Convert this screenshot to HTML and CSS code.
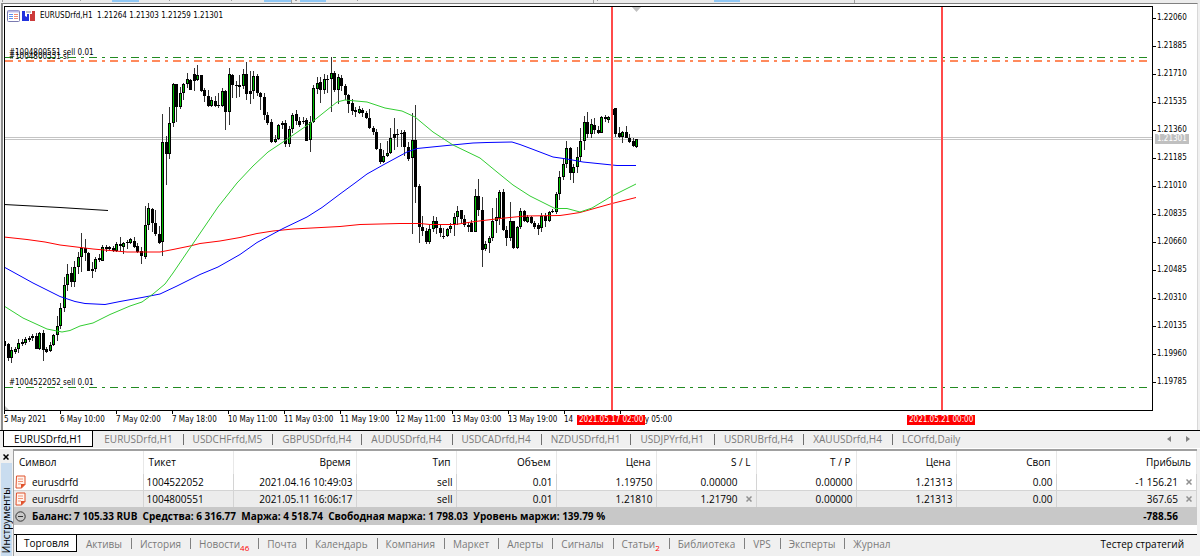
FILE: index.html
```html
<!DOCTYPE html>
<html lang="ru">
<head>
<meta charset="utf-8">
<title>EURUSDrfd,H1</title>
<link rel="stylesheet" href="styles.css">
</head>
<body>
<div class="toolbar-edge" aria-hidden="true">
  <svg class="toolbar-marks">
    <g fill="#90c8f6"><rect x="112" width="27" height="2"/><rect x="264" width="27" height="2"/><rect x="300" width="26" height="2"/><rect x="714" width="26" height="2"/></g>
    <g fill="#a0a0a0"><rect x="2" width="1" height="2"/><rect x="80" width="1" height="1"/><rect x="169" width="1" height="1"/><rect x="231" width="1" height="1"/><rect x="291" width="1" height="3"/><rect x="295" width="2" height="1"/><rect x="357" width="1" height="1"/><rect x="593" width="1" height="3"/><rect x="597" width="1" height="1"/><rect x="854" width="1" height="3"/></g>
  </svg>
</div>

<main class="chart-window">
  <div class="plot">
    <svg class="plot-svg" role="img" aria-label="EURUSDrfd H1">
      <g transform="translate(-5 -7)">
        <g class="price-line"><line x1="5" x2="110%" y1="137.5" y2="137.5"/><line x1="5" x2="110%" y1="139.5" y2="139.5"/></g>
        <line class="level order" x1="5" x2="1150" y1="57.5" y2="57.5"/>
        <line class="level stop" x1="5" x2="1150" y1="61" y2="61"/>
        <line class="level order" x1="5" x2="1150" y1="387.5" y2="387.5"/>
        <g id="candles" shape-rendering="crispEdges"></g>
        <g class="averages">
          <polyline stroke="#000" points="4,204.5 60,207.5 108,210.5"/>
          <polyline stroke="#f00" points="4,237 27,239.5 45,242 60,245 93,249 110,250.5 127,252 160,252 173,249.5 190,246 200,243.5 220,241 240,237.5 257,233.5 273,231 293,229 340,226.5 360,224.5 400,223.5 420,223.5 430,224.5 455,224.5 475,221.5 500,218.5 525,216 560,215.5 567,214.5 580,212.5 612,203.5 636,197.5"/>
          <polyline stroke="#00f" points="4,267 33,283 60,296.5 75,301.5 85,303.5 105,304.5 120,301.5 142,297.5 160,294 177,286 200,274.5 218,267 240,254.5 257,242.5 283,228.5 307,217 322,207.5 340,194 355,183 367,174 383,165 407,152 417,148.5 447,145.5 473,143 487,142.5 512,142 520,144.5 532,149 553,157 567,159 583,162 617,165.5 636,165.5"/>
          <polyline stroke="#32cd32" points="4,306 23,318 47,329 62,332 70,330.5 80,326 93,323 110,314.5 130,306 142,302 153,294 165,284 173,273 190,248 218,207 237,183 253,166 268,152 283,142 312,122 337,102 345,100 367,102 385,108 402,111 415,117 433,132 453,145 480,158 497,172 513,185 530,196 555,208.5 567,208.5 580,212 592,208 612,196 636,184"/>
        </g>
        <g class="day-line"><line x1="612" x2="612" y1="7" y2="410"/><line x1="942" x2="942" y1="7" y2="410"/></g>
        <path fill="#c0c0c0" d="M632 7h9l-4.500 5z"/>
        <path fill="#c0c0c0" d="M5 410v-4l4 4z"/>
      </g>
    </svg>
    <header class="plot-title">
      <svg class="title-icons" width="29" height="12">
        <rect x=".5" y=".5" width="12" height="11" rx="1" fill="#fff" stroke="#7a7ab0"/>
        <path d="M1 1.500h11" stroke="#b7b7e6" stroke-width="2"/>
        <path d="M2 4.500h4M2 6.500h4M2 8.500h4" stroke="#5b8ff0"/><path d="M7 4.500h4M7 6.500h4M7 8.500h4" stroke="#f08a74"/>
        <path d="M15 1h3v5l2 1v-3h2v7h-7z" fill="#2233dd"/><path d="M28 1h-3v3h-2v7h5z" fill="#cc3a3a"/><path d="M19 1h5v2h-5z" fill="#c4c4c4"/>
      </svg>
      <span>EURUSDrfd,H1&nbsp; 1.21264 1.21303 1.21259 1.21301</span>
    </header>
    <span class="order-label order-top">#1004800551 sell 0.01</span>
    <span class="order-label order-stop">#1004800551 sl</span>
    <span class="order-label order-low">#1004522052 sell 0.01</span>
  </div>
  <div class="price-axis">
    <span>1.22060</span><span>1.21885</span><span>1.21710</span><span>1.21535</span><span>1.21360</span><span>1.21185</span><span>1.21010</span><span>1.20835</span><span>1.20660</span><span>1.20485</span><span>1.20310</span><span>1.20135</span><span>1.19960</span><span>1.19785</span>
    <b class="price-tag">1.21301</b>
  </div>
  <div class="time-axis">
    <span>5 May 2021</span><span>6 May 10:00</span><span>7 May 02:00</span><span>7 May 18:00</span><span>10 May 11:00</span><span>11 May 03:00</span><span>11 May 19:00</span><span>12 May 11:00</span><span>13 May 03:00</span><span>13 May 19:00</span><span>14</span><span class="covered">y 05:00</span>
    <b class="time-tag tag-near">2021.05.17 02:00</b>
    <b class="time-tag tag-far">2021.05.21 00:00</b>
  </div>
</main>

<nav class="chart-tabs">
  <button class="chart-tab current">EURUSDrfd,H1</button><button class="chart-tab">EURUSDrfd,H1</button><button class="chart-tab">USDCHFrfd,M5</button><button class="chart-tab">GBPUSDrfd,H4</button><button class="chart-tab">AUDUSDrfd,H4</button><button class="chart-tab">USDCADrfd,H4</button><button class="chart-tab">NZDUSDrfd,H1</button><button class="chart-tab">USDJPYrfd,H1</button><button class="chart-tab">USDRUBrfd,H4</button><button class="chart-tab">XAUUSDrfd,H4</button><button class="chart-tab">LCOrfd,Daily</button>
  <span class="scrollers">
    <button class="icon-button" aria-label="Назад"><svg width="4" height="6"><path d="M4 0v6L0 3z" fill="#808080"/></svg></button>
    <button class="icon-button" aria-label="Вперёд"><svg width="4" height="6"><path d="M0 0v6l4-3z" fill="#808080"/></svg></button>
  </span>
</nav>

<section class="terminal">
  <aside class="side">
    <button class="icon-button side-close" aria-label="Закрыть"><svg width="6" height="6"><path d="M.5.5l5 5M5.500.5l-5 5" stroke="#000" stroke-width="1.500"/></svg></button>
    <div class="side-title"><span>Инструменты</span></div>
  </aside>
  <div class="panel">
    <table class="trades">
      <colgroup><col class="c-symbol"><col class="c-ticket"><col class="c-time"><col class="c-num"><col class="c-num"><col class="c-num"><col class="c-num"><col class="c-num"><col class="c-num"><col class="c-num"><col></colgroup>
      <thead><tr><th>Символ</th><th>Тикет</th><th>Время</th><th>Тип</th><th>Объем</th><th>Цена</th><th>S / L</th><th>T / P</th><th>Цена</th><th>Своп</th><th>Прибыль</th></tr></thead>
      <tbody>
        <tr><td><span class="symbol"><svg width="11" height="14"><path d="M1.500 1h8.500v8.500L6.500 13H1z" fill="#fff4ee" stroke="#e0522c"/><path d="M3 4h5M3 6.500h5M3 9h3" stroke="#ee9478"/><path d="M6 13.500V9h4.500z" fill="#e0522c"/></svg>eurusdrfd</span></td><td>1004522052</td><td>2021.04.16 10:49:03</td><td>sell</td><td>0.01</td><td>1.19750</td><td class="with-slot">0.00000</td><td>0.00000</td><td>1.21313</td><td>0.00</td><td><span class="closable">-1 156.21<button class="icon-button" aria-label="Закрыть позицию"><svg width="6" height="6"><path d="M.5.5l5 5M5.500.5l-5 5" stroke="#909090" stroke-width="1.500"/></svg></button></span></td></tr>
        <tr class="alt"><td><span class="symbol"><svg width="11" height="14"><path d="M1.500 1h8.500v8.500L6.500 13H1z" fill="#fff4ee" stroke="#e0522c"/><path d="M3 4h5M3 6.500h5M3 9h3" stroke="#ee9478"/><path d="M6 13.500V9h4.500z" fill="#e0522c"/></svg>eurusdrfd</span></td><td>1004800551</td><td>2021.05.11 16:06:17</td><td>sell</td><td>0.01</td><td>1.21810</td><td><span class="closable">1.21790<button class="icon-button" aria-label="Убрать S / L"><svg width="6" height="6"><path d="M.5.5l5 5M5.500.5l-5 5" stroke="#909090" stroke-width="1.500"/></svg></button></span></td><td>0.00000</td><td>1.21313</td><td>0.00</td><td><span class="closable">367.65<button class="icon-button" aria-label="Закрыть позицию"><svg width="6" height="6"><path d="M.5.5l5 5M5.500.5l-5 5" stroke="#909090" stroke-width="1.500"/></svg></button></span></td></tr>
      </tbody>
    </table>
    <div class="balance">
      <svg width="11" height="11"><circle cx="5.500" cy="5.500" r="4.700" fill="none" stroke="#333"/><path d="M3 5.500h5" stroke="#333"/></svg>
      <span class="balance-text">Баланс: 7 105.33 RUB&nbsp; Средства: 6 316.77&nbsp; Маржа: 4 518.74&nbsp; Свободная маржа: 1 798.03&nbsp; Уровень маржи: 139.79 %</span>
      <span class="balance-total">-788.56</span>
    </div>
    <nav class="tool-tabs">
      <button class="tool-tab current">Торговля</button><button class="tool-tab">Активы</button><button class="tool-tab">История</button><button class="tool-tab">Новости<sub>46</sub></button><button class="tool-tab">Почта</button><button class="tool-tab">Календарь</button><button class="tool-tab">Компания</button><button class="tool-tab">Маркет</button><button class="tool-tab">Алерты</button><button class="tool-tab">Сигналы</button><button class="tool-tab">Статьи<sub>2</sub></button><button class="tool-tab">Библиотека</button><button class="tool-tab">VPS</button><button class="tool-tab">Эксперты</button><button class="tool-tab">Журнал</button>
      <button class="tester">Тестер стратегий</button>
    </nav>
  </div>
</section>
<script src="chart.js"></script>
</body>
</html>
```
FILE: styles.css
```css
* { box-sizing: border-box; }
body {
  margin: 0;
  min-height: 100vh;
  display: flex;
  flex-direction: column;
  background: #f0f0f0;
  color: #000;
  font: 10px/16px "Open Sans", "Noto Sans", sans-serif;
}
button {
  margin: 0;
  padding: 0;
  border: 0;
  background: none;
  color: inherit;
  font: inherit;
}
svg { display: block; }

.toolbar-edge { height: 3px; background: #ececec; }
.toolbar-marks { width: 100%; height: 3px; }

/* chart */
.chart-window {
  display: grid;
  grid-template-columns: 1fr 44px;
  grid-template-rows: 405px 19px;
  padding: 2px 0 0 2px;
  border: 1px solid #808080;
  border-right-color: #d8d8d8;
  border-bottom: 0;
  border-left: 2px solid #8c8c8c;
  margin-left: 1px;
  margin-right: 2px;
  background: #fff;
  font: 8px/10px "DejaVu Sans Condensed", "DejaVu Sans", sans-serif;
}
.plot { position: relative; border: 1px solid #000; margin-left: -1px; }
.plot-svg { width: 100%; height: 100%; }
.price-line line { stroke: #c4c4c4; }
.level { stroke-dasharray: 8 5 3 5; }
.order { stroke: #228b22; }
.stop { stroke: #ff8a5c; stroke-width: 2; }
.averages polyline { fill: none; }
.day-line line { stroke: #ff4a4a; stroke-width: 2; }
.wick { fill: #333; }
.bear { fill: #000; }
.bull { fill: #00c000; }

.plot-title {
  position: absolute;
  top: 3px;
  left: 2px;
  display: flex;
  align-items: center;
  gap: 4px;
}
.order-label { position: absolute; left: 4px; }
.order-top { top: 41px; }
.order-stop { top: 45px; }
.order-low { top: 371px; }

.price-axis { position: relative; display: flex; flex-direction: column; margin-top: -2px; }
.price-axis span {
  display: flex;
  align-items: center;
  gap: 1px;
  height: 28px;
}
.price-axis span::before { content: ""; width: 3px; height: 1px; background: #000; }
.price-tag {
  position: absolute;
  top: 130px;
  left: 2px;
  padding: 0 2px;
  background: #c0c0c0;
  color: #fff;
  font-weight: normal;
}
.time-axis { position: relative; grid-column: 1 / -1; display: flex; margin-left: -1px; }
.time-axis span { flex: 0 0 56px; white-space: nowrap; }
.time-axis span::before { content: ""; display: block; width: 1px; height: 3px; margin-bottom: 1px; background: #000; }
.time-axis .covered { text-align: right; padding-right: 4px; }
.time-tag {
  position: absolute;
  top: 4px;
  padding: 0 2px;
  background: #f00;
  color: #fff;
  font-weight: normal;
}
.tag-near { left: 573px; }
.tag-far { left: 903px; }

/* chart tabs */
.chart-tabs {
  display: flex;
  align-items: flex-start;
  height: 19px;
  padding-left: 3px;
  border-top: 1px solid #000;
  border-bottom: 1px solid #fff;
  color: #7a7a7a;
}
.chart-tab { position: relative; height: 16px; padding: 0 10px; white-space: nowrap; }
.chart-tab.current { margin-right: 1px; }
.chart-tab:not(.current) + .chart-tab::before { content: ""; position: absolute; left: 0; top: 3px; width: 1px; height: 11px; background: #707070; }
.current { background: #fff; color: #000; border: solid #000; border-width: 0 1px 1px; }
.scrollers { display: flex; gap: 15px; margin-left: auto; padding: 5px 10px 0 0; }

/* terminal */
.terminal { flex: 1; display: flex; padding-right: 3px; }
.side { width: 13px; display: flex; flex-direction: column; }
.side-close { padding: 5px 0 3px 3px; }
.side-title { flex: 1; margin: 0 1px; padding-bottom: 3px; background: #c9dcef; display: flex; align-items: flex-end; justify-content: center; }
.side-title span { writing-mode: vertical-rl; transform: rotate(180deg); line-height: 11px; }
.panel { flex: 1; min-width: 0; background: #fff; border: 1px solid #a0a0a0; border-width: 2px 0 0 1px; display: flex; flex-direction: column; }

.trades { width: 100%; table-layout: fixed; border-collapse: collapse; }
.c-symbol { width: 129px; }
.c-ticket { width: 90px; }
.c-time { width: 123px; }
.c-num { width: 100px; }
.trades th, .trades td { padding: 0 3px; text-align: right; white-space: nowrap; border-right: 1px solid #d4d4d4; }
.trades th { height: 22px; padding: 0 5px; font-weight: normal; border-right-color: #e8e8e8; }
.trades td { height: 17px; border-top: 1px solid #d4d4d4; }
.trades tbody tr:first-child td { border-top-color: #fff; }
.trades th:nth-child(-n+2), .trades td:nth-child(-n+2) { text-align: left; }
.trades td:first-child { padding-left: 1px; }
.alt { background: #ececec; }
.symbol { display: flex; align-items: center; gap: 6px; }
.closable { display: flex; align-items: center; justify-content: flex-end; gap: 8px; padding-right: 1px; }
.trades .with-slot { padding-right: 18px; }

.balance { display: flex; align-items: center; gap: 6px; height: 18px; padding: 0 19px 0 1px; background: #c8c8c8; font-weight: bold; white-space: nowrap; }
.balance-total { margin-left: auto; }

.tool-tabs { flex: 1; display: flex; align-items: flex-start; margin-top: 9px; padding-left: 2px; border-top: 1px solid #000; background: #f0f0f0; color: #7a7a7a; }
.tool-tab { position: relative; height: 17px; padding: 0 9px; white-space: nowrap; }
.tool-tab.current { padding: 0 7px; }
.tool-tab:not(.current) + .tool-tab::before { content: ""; position: absolute; left: 0; top: 3px; width: 1px; height: 11px; background: #808080; }
.tool-tab sub { font-size: 8px; line-height: 8px; color: #f00; }
.tester { margin-left: auto; padding-right: 13px; color: #000; height: 17px; }
```
FILE: chart.js
```js
// Hourly candles: wick top, body top, body bottom, wick bottom, + rising / - falling.
const candles = `
341 341 346 346 -|343 344 358 361 -|347 350 358 363 +|347 349 352 354 +|339 343 349 353 +|339 342 344 346 -|337 339 343 345 +|336 338 340 342 -|334 336 338 341 +|333 336 349 349 -
332 333 349 350 +|330 333 350 361 -|347 349 352 353 -|342 345 351 352 +|334 335 345 346 +|316 326 335 341 +|303 308 326 329 +|277 285 308 312 +|264 274 285 291 +|267 273 282 287 -
261 267 282 287 +|252 257 267 274 +|233 248 257 272 +|239 248 253 261 -|252 253 271 271 -|262 269 271 278 -|257 259 269 272 +|254 258 260 262 -|245 247 261 261 +|245 247 249 252 -
246 247 249 250 -|246 248 251 252 -|242 244 251 252 +|237 244 246 251 -|242 243 247 254 +|240 242 243 249 -|238 239 243 244 +|237 241 247 248 -|243 246 252 253 -|247 251 256 264 -
206 225 257 259 +|203 208 225 230 +|208 209 223 232 -|210 223 234 236 -|226 234 243 244 -|114 142 242 256 +|136 142 154 185 -|107 123 154 159 +|83 84 123 127 +|84 84 107 122 -
87 93 107 109 +|83 84 93 100 +|73 79 84 88 +|79 80 90 90 -|68 74 81 91 -|65 75 80 81 +|75 75 91 92 -|88 90 96 102 -|90 96 106 107 -|97 100 106 107 +
96 101 106 107 -|93 105 106 108 -|88 91 106 107 +|90 91 112 130 -|68 74 112 125 +|74 75 85 98 -|81 85 86 98 -|75 85 87 97 -|69 74 86 89 +|62 74 94 100 -
71 91 94 104 -|71 76 91 99 +|74 76 93 96 -|92 93 97 110 -|93 97 115 120 -|112 115 123 125 -|119 122 142 143 -|135 139 142 143 +|124 125 139 140 +|121 123 125 129 -
120 123 144 147 -|126 129 144 147 +|113 115 129 133 +|110 114 121 125 -|117 121 125 127 -|117 121 122 124 -|118 120 141 141 -|116 122 140 152 +|85 88 122 123 +|77 83 89 94 +
77 82 90 103 -|74 79 90 94 +|75 79 80 93 -|57 73 79 112 +|71 73 90 92 -|74 77 90 104 +|75 78 86 91 -|84 86 95 100 -|94 95 104 113 -|99 103 111 115 -
107 110 112 117 -|106 109 113 114 +|108 110 113 117 -|111 113 118 119 -|109 118 128 129 -|126 128 132 135 -|129 132 149 150 -|143 149 162 164 -|150 156 162 163 +|141 153 156 157 +
128 138 153 154 +|118 134 138 150 -|129 134 135 147 -|130 133 134 147 -|130 132 147 156 -|142 147 159 161 -|113 140 158 234 +|105 140 187 203 -|184 186 227 243 -|216 227 231 236 -
228 231 242 244 -|225 229 242 244 +|216 221 229 232 +|217 221 228 234 -|225 228 233 237 -|228 236 237 239 -|228 229 236 237 +|223 226 229 233 +|213 217 224 236 +|206 211 217 225 +
210 210 219 224 -|215 219 225 227 -|223 225 227 232 -|220 223 232 232 -|189 196 232 232 +|179 196 210 216 -|197 210 250 267 -|241 244 249 251 +|236 238 243 253 +|208 221 238 241 +
198 217 221 233 +|190 192 218 225 +|189 192 230 231 -|226 230 238 246 -|202 221 238 241 +|221 221 248 249 -|226 227 248 249 +|208 211 227 229 +|210 211 221 222 -|215 217 222 223 +
216 217 223 224 -|221 223 227 229 -|223 225 229 235 -|213 216 228 232 +|213 216 221 227 -|211 212 221 222 +|209 211 212 213 -|192 194 212 214 +|171 177 194 200 +|159 164 177 180 +
141 148 164 168 +|147 148 173 180 -|164 167 173 183 +|147 157 167 173 +|128 141 157 161 +|116 122 141 150 +|112 122 134 138 -|119 124 134 138 +|118 125 130 134 -|126 130 133 134 -
116 117 133 133 +|115 117 119 122 -|116 117 120 123 +|108 109 115 115 -|108 108 134 137 -|127 133 137 138 -|131 132 137 143 +|126 132 138 138 -|134 138 142 143 -|138 141 146 147 -
139 139 147 148 +`.trim().split(/[|\n]/).map(row => row.split(" "));

const group = document.getElementById("candles");
const NS = "http://www.w3.org/2000/svg";
const STEP = 3.513;

function rect(cls, x, y, width, height) {
  const node = document.createElementNS(NS, "rect");
  Object.entries({ class: cls, x, y, width, height }).forEach(([k, v]) => node.setAttribute(k, v));
  group.appendChild(node);
}

candles.forEach(([high, top, bottom, low, sign], i) => {
  const x = Math.round(4 + i * STEP);
  const height = Math.max(1, bottom - top);
  rect("wick", x, +high, 1, low - high);
  rect("bear", x - 1, +top, 3, height);
  if (sign === "+" && height > 2) {
    rect("bull", x, +top + 1, 1, height - 2);
  }
});
```
